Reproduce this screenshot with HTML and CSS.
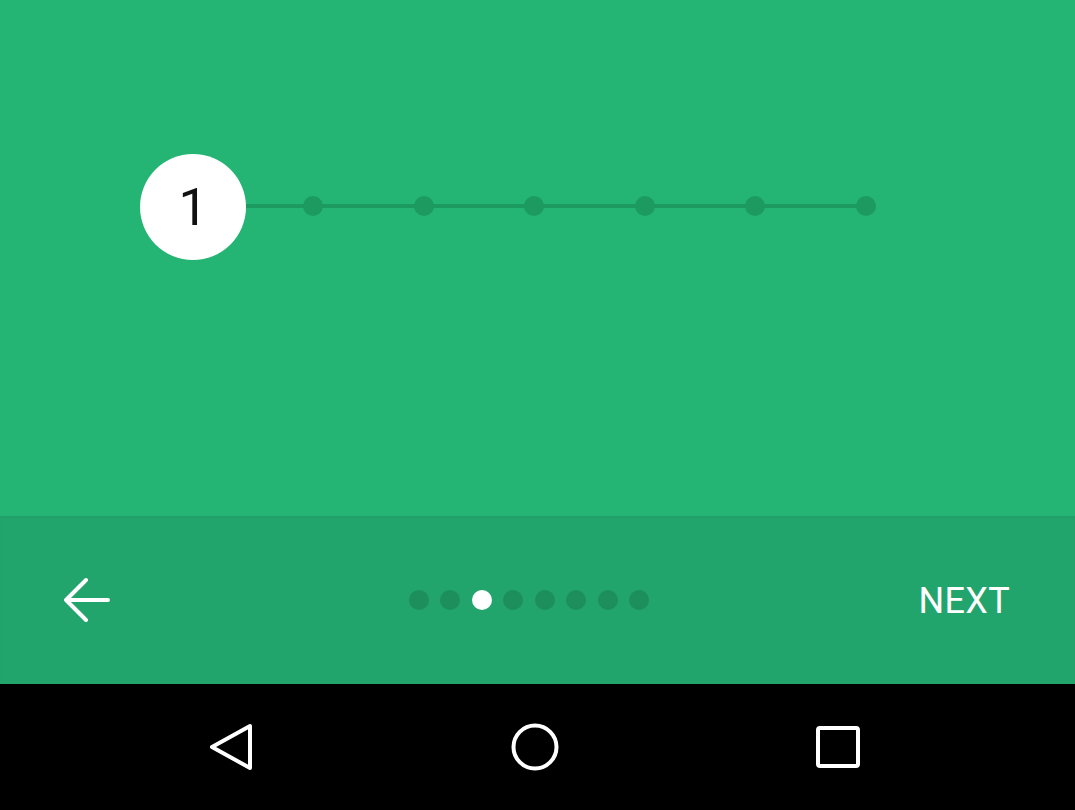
FILE: index.html
```html
<!DOCTYPE html>
<html>
<head>
<meta charset="utf-8">
<link rel="stylesheet" href="styles.css">
</head>
<body>
<div class="screen">
  <main class="content">
    <div class="stepper">
      <div class="step-circle">1</div>
      <div class="track">
        <span class="tdot"></span>
        <span class="tdot"></span>
        <span class="tdot"></span>
        <span class="tdot"></span>
        <span class="tdot"></span>
        <span class="tdot"></span>
      </div>
    </div>
  </main>
  <footer class="bottom-bar">
    <div class="back">
      <svg width="48" height="48" viewBox="0 0 48 48"><path d="M44 24H2M22 4L2 24l20 20" fill="none" stroke="#fff" stroke-width="4" stroke-linecap="round" stroke-linejoin="round"/></svg>
    </div>
    <div class="pager">
      <span class="pdot"></span>
      <span class="pdot"></span>
      <span class="pdot active"></span>
      <span class="pdot"></span>
      <span class="pdot"></span>
      <span class="pdot"></span>
      <span class="pdot"></span>
      <span class="pdot"></span>
    </div>
    <div class="next">NEXT</div>
  </footer>
  <nav class="navbar">
    <svg class="nav-icon" width="48" height="48" viewBox="0 0 48 48"><path d="M42 3V45L4 24Z" fill="none" stroke="#fff" stroke-width="4" stroke-linejoin="round"/></svg>
    <svg class="nav-icon" width="48" height="48" viewBox="0 0 48 48"><circle cx="24" cy="24" r="21.5" fill="none" stroke="#fff" stroke-width="4"/></svg>
    <svg class="nav-icon" width="48" height="48" viewBox="0 0 48 48"><rect x="4" y="5" width="40" height="38" rx="2" fill="none" stroke="#fff" stroke-width="4"/></svg>
  </nav>
</div>
</body>
</html>
```
FILE: styles.css
```css
html, body {
  margin: 0;
  padding: 0;
}
body {
  font-family: Roboto, "Liberation Sans", sans-serif;
  background: #000;
}
.screen {
  width: 1075px;
  height: 810px;
  display: flex;
  flex-direction: column;
  overflow: hidden;
}
.content {
  height: 516px;
  background: #24b574;
  padding-top: 154px;
  box-sizing: border-box;
}
.stepper {
  display: flex;
  align-items: center;
  padding-left: 140px;
}
.step-circle {
  width: 106px;
  height: 106px;
  border-radius: 50%;
  background: #fff;
  color: #111;
  font-size: 52px;
  display: flex;
  align-items: center;
  justify-content: center;
  line-height: 1;
  padding-top: 2px;
  box-sizing: border-box;
  flex: none;
}
.track {
  display: flex;
  align-items: center;
  gap: 90.5px;
  padding-left: 57px;
  width: 628px;
  box-sizing: border-box;
  height: 20px;
  margin-top: -2px;
  background: linear-gradient(to bottom, transparent 8px, #1c9a60 8px, #1c9a60 12px, transparent 12px);
  background-size: calc(100% - 10px) 100%;
  background-repeat: no-repeat;
}
.tdot {
  width: 20px;
  height: 20px;
  border-radius: 50%;
  background: #1c9a60;
  flex: none;
}
.bottom-bar {
  height: 168px;
  background: #22a56c;
  display: grid;
  grid-template-columns: 1fr auto 1fr;
  align-items: center;
  padding: 0 65px 0 64px;
  box-shadow: inset 0 2px 2px rgba(0,0,0,0.04);
}
.back {
  display: flex;
  align-items: center;
  justify-self: start;
}
.pager {
  display: flex;
  gap: 11.5px;
  margin-right: 16px;
}
.pdot {
  width: 20px;
  height: 20px;
  border-radius: 50%;
  background: #1c8f5c;
}
.pdot.active {
  background: #fff;
}
.next {
  justify-self: end;
  color: #fff;
  font-size: 36px;
  line-height: 1;
  letter-spacing: 0.3px;
  padding-top: 2px;
}
.navbar {
  flex: 1;
  background: #000;
  display: flex;
  justify-content: center;
  align-items: center;
  gap: 255px;
  padding-right: 5px;
}
.nav-icon {
  flex: none;
}
```
